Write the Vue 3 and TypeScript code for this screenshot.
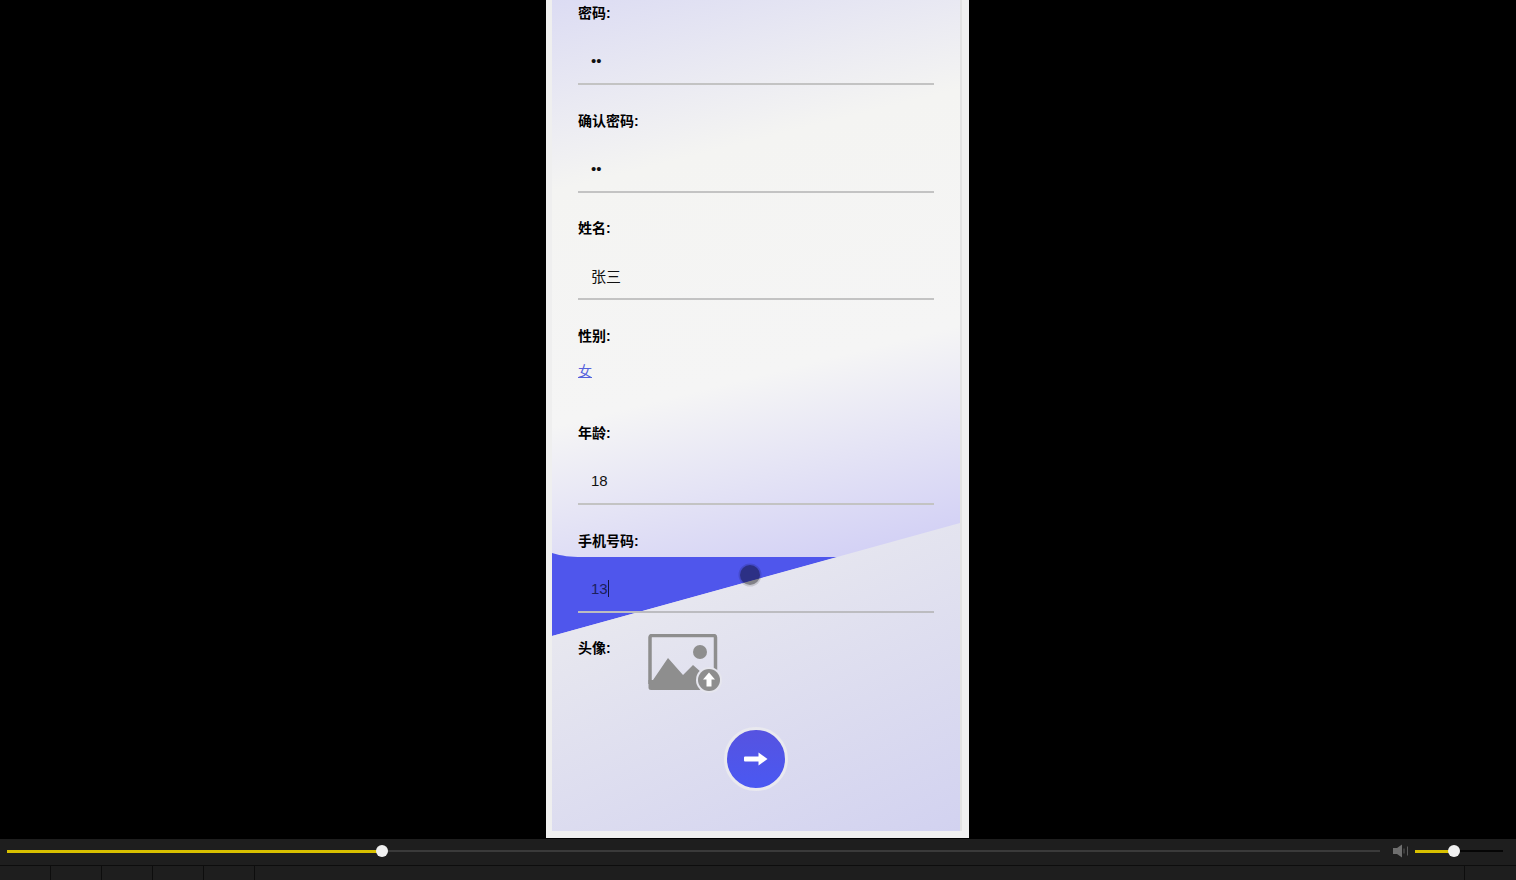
<script setup lang="ts">
const tabs: number[] = [1, 2, 3, 4, 5]
</script>

<template>
  <div class="screen">
    <main class="stage">
      <div class="phone">
        <section class="panel">
          <svg class="backdrop" width="408" height="831" viewBox="0 0 408 831" aria-hidden="true">
            <defs>
              <linearGradient id="sky" gradientUnits="userSpaceOnUse" x1="0" y1="0" x2="150" y2="600">
                <stop offset="0" stop-color="#dcdcf3" />
                <stop offset="0.3" stop-color="#f4f4f2" />
                <stop offset="0.67" stop-color="#f5f5f5" />
                <stop offset="1" stop-color="#d2d0f5" />
              </linearGradient>
              <linearGradient id="ground" gradientUnits="userSpaceOnUse" x1="200" y1="540" x2="340" y2="860">
                <stop offset="0" stop-color="#e8e8ef" />
                <stop offset="1" stop-color="#d2d2f0" />
              </linearGradient>
            </defs>
            <rect width="408" height="831" fill="url(#sky)" />
            <path d="M0 553C10 556 18 557 30 557L286 557L0 636Z" fill="#4f56ec" />
            <path d="M0 636L408 523L408 831L0 831Z" fill="url(#ground)" />
            <circle cx="198" cy="575" r="11.5" fill="#000" opacity="0.13" />
            <circle cx="198" cy="575" r="10" fill="#000" opacity="0.35" />
          </svg>

          <form class="form" @submit.prevent>
            <div class="field">
              <label class="label">密码:</label>
              <input class="input" type="password" value="12" />
            </div>
            <div class="field">
              <label class="label">确认密码:</label>
              <input class="input" type="password" value="12" />
            </div>
            <div class="field">
              <label class="label">姓名:</label>
              <input class="input" type="text" value="张三" />
            </div>
            <div class="field field-gender">
              <label class="label">性别:</label>
              <a class="link" href="#">女</a>
            </div>
            <div class="field">
              <label class="label">年龄:</label>
              <input class="input" type="text" value="18" />
            </div>
            <div class="field">
              <label class="label">手机号码:</label>
              <div class="input input-active">13<span class="caret"></span></div>
            </div>
            <div class="avatar-row">
              <label class="label label-avatar">头像:</label>
              <svg class="upload" width="76" height="60" viewBox="0 0 76 60" aria-label="上传头像">
                <path d="M2 50V3.500A2 2 0 0 1 4 1.500H65.500A2 2 0 0 1 67.500 3.500V38" fill="none" stroke="#8e8e8e" stroke-width="3.500" />
                <circle cx="52" cy="18" r="7" fill="#8e8e8e" />
                <path d="M0.500 46H5L20 24L35 41L45 31L62 46V56H3A2.500 2.500 0 0 1 0.500 53.500Z" fill="#8e8e8e" />
                <circle cx="61" cy="46" r="13" fill="#e6e6ee" />
                <circle cx="61" cy="46" r="11" fill="#8e8e8e" />
                <path d="M61 38.500L67 45.500H63.500V52.500H58.500V45.500H55Z" fill="#fff" />
              </svg>
            </div>
            <div class="actions">
              <button class="next" type="submit" aria-label="下一步">
                <svg width="24" height="14" viewBox="0 0 24 14" aria-hidden="true">
                  <path d="M1 4.500H14.500V0.500L23.500 7L14.500 13.500V9.500H1A1 1 0 0 1 0 8.500V5.500A1 1 0 0 1 1 4.500Z" fill="#fff" />
                </svg>
              </button>
            </div>
          </form>
        </section>
        <div class="edge"></div>
      </div>
    </main>

    <footer class="player">
      <div class="controls">
        <div class="track seek">
          <div class="fill seek-fill"><span class="knob"></span></div>
        </div>
        <svg class="speaker" width="16" height="14" viewBox="0 0 16 14" aria-hidden="true">
          <path d="M0 4H4L9 0.500V13.500L4 10H0Z" fill="#6e6e6e" />
          <path d="M11 4.500V9.500M14.500 2.500V11.500" stroke="#5a5a5a" stroke-width="1" />
        </svg>
        <div class="track volume">
          <div class="fill volume-fill"><span class="knob"></span></div>
        </div>
      </div>
      <div class="tabs">
        <span v-for="t in tabs" :key="t" class="tab"></span>
        <span class="tab-rest"></span>
        <span class="tab-end"></span>
      </div>
    </footer>
  </div>
</template>

<style scoped>
.screen {
  display: flex;
  flex-direction: column;
  width: 1516px;
  height: 880px;
  overflow: hidden;
  background: #000;
  font-family: "Liberation Sans", "Noto Sans CJK SC", sans-serif;
}
.stage {
  height: 839px;
  flex: none;
  padding-left: 546px;
  box-sizing: border-box;
}
.phone {
  display: flex;
  width: 423px;
  height: 838px;
  box-sizing: border-box;
  padding: 0 0 7px 6px;
  background: #efefef;
}
.panel {
  position: relative;
  width: 408px;
  height: 831px;
  flex: none;
  overflow: hidden;
}
.edge {
  width: 2px;
  height: 100%;
  background: #e2e2e2;
}
.backdrop {
  position: absolute;
  inset: 0;
  display: block;
}
.form {
  position: relative;
  width: 356px;
  margin-left: 26px;
  padding-top: 4px;
}
.field {
  margin-bottom: 26.5px;
}
.field-gender {
  height: 71px;
}
.label {
  display: block;
  height: 18px;
  margin-bottom: 16px;
  font-size: 14px;
  font-weight: 700;
  line-height: 18px;
  color: #000;
}
.input {
  display: flex;
  align-items: center;
  width: 100%;
  height: 47px;
  box-sizing: border-box;
  margin: 0;
  padding: 0 0 0 13px;
  border: 0;
  border-bottom: 2px solid #c3c3c3;
  outline: none;
  background: transparent;
  font-family: inherit;
  font-size: 15px;
  color: #111;
}
.input-active {
  color: #1c1f5c;
  border-bottom-color: #bcbcc0;
}
.caret {
  display: inline-block;
  width: 1px;
  height: 17px;
  background: #14163f;
}
.link {
  display: block;
  font-size: 14px;
  line-height: 20px;
  color: #5561dc;
  text-decoration: underline;
}
.avatar-row {
  display: flex;
  align-items: flex-start;
}
.label-avatar {
  width: 70px;
  flex: none;
  margin-bottom: 0;
}
.upload {
  display: block;
  flex: none;
  margin-top: -5px;
}
.actions {
  display: flex;
  justify-content: center;
  margin-top: 33px;
}
.next {
  display: flex;
  align-items: center;
  justify-content: center;
  width: 64px;
  height: 64px;
  box-sizing: border-box;
  padding: 0;
  border: 3px solid #e9e9ef;
  border-radius: 50%;
  background: linear-gradient(180deg, #5653e0 0%, #4a58f2 100%);
}
.player {
  flex: 1;
  display: flex;
  flex-direction: column;
  background: #1e1e1e;
}
.controls {
  display: flex;
  align-items: center;
  height: 27px;
  padding: 0 0 2px 7px;
  box-sizing: border-box;
  border-bottom: 1px solid #0d0d0d;
}
.track {
  height: 2px;
  flex: none;
  position: relative;
}
.seek {
  width: 1373px;
  background: #3a3a3a;
}
.volume {
  width: 88px;
  margin-left: 6px;
  background: #050505;
}
.fill {
  position: relative;
  height: 3px;
  margin-top: -0.5px;
  background: #d8c000;
}
.seek-fill {
  width: 375px;
}
.volume-fill {
  width: 39px;
}
.knob {
  position: absolute;
  right: -6px;
  top: -4.5px;
  width: 12px;
  height: 12px;
  border-radius: 50%;
  background: #f1f1f1;
}
.speaker {
  display: block;
  flex: none;
  margin-left: 13px;
}
.tabs {
  flex: 1;
  display: flex;
}
.tab {
  width: 50px;
  flex: none;
  border-right: 1px solid #0d0d0d;
}
.tab-rest {
  flex: 1;
  border-right: 1px solid #0d0d0d;
}
.tab-end {
  width: 51px;
  flex: none;
}
</style>

<style>
html,
body {
  margin: 0;
  background: #000;
}
</style>
